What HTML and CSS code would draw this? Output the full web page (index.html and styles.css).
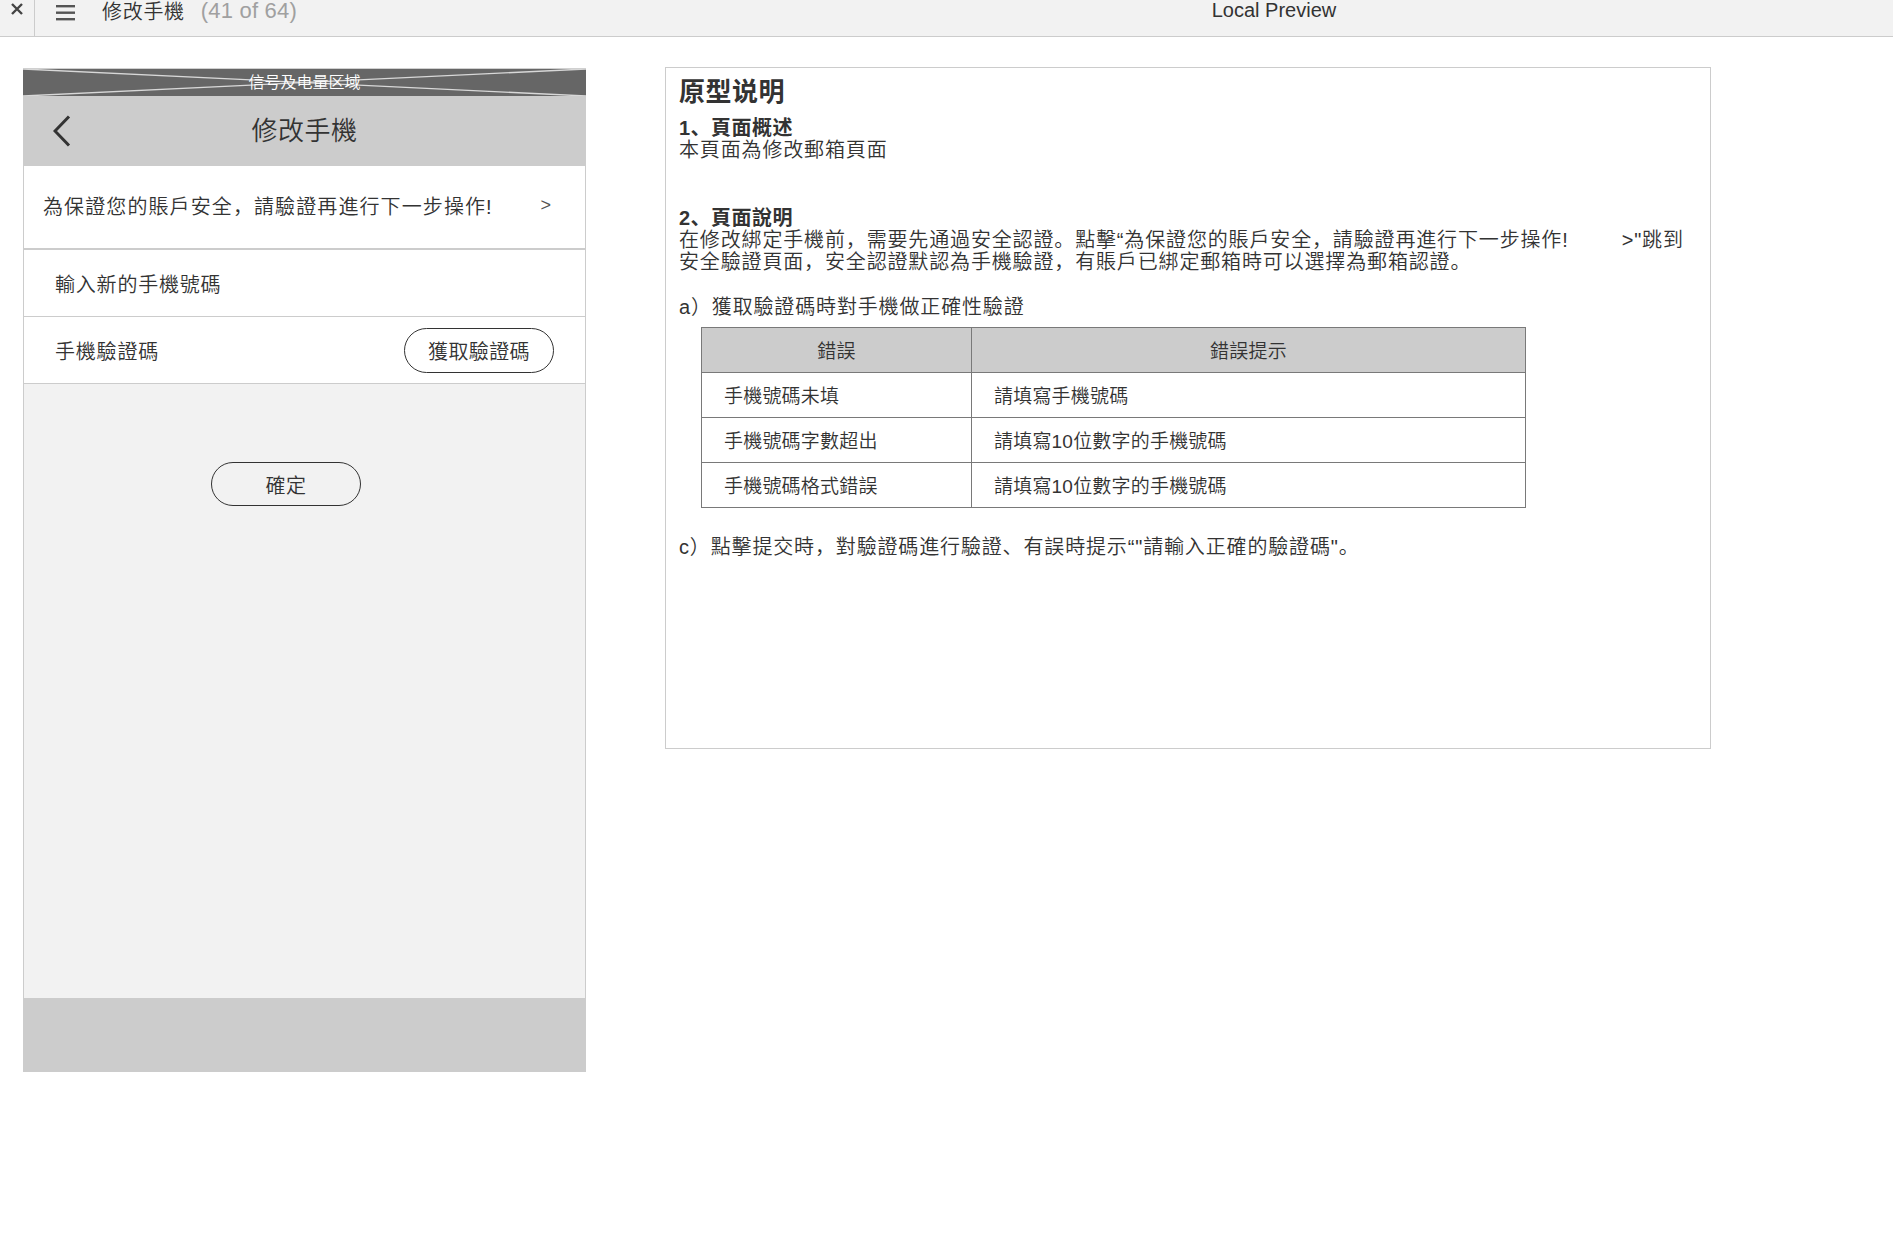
FILE: index.html
```html
<!DOCTYPE html>
<html lang="zh-Hans">
<head>
<meta charset="utf-8">
<title>修改手機</title>
<link rel="stylesheet" href="styles.css">
</head>
<body>
<div class="topbar">
  <div class="tb-close">
    <svg width="12" height="12" viewBox="0 0 12 12"><path d="M1 1 L11 11 M11 1 L1 11" stroke="#444" stroke-width="2.4" fill="none"/></svg>
  </div>
  <div class="tb-left">
    <svg class="tb-menu" width="19" height="18" viewBox="0 0 19 18"><rect x="0" y="1" width="19" height="2.4" fill="#555"/><rect x="0" y="7.5" width="19" height="2.4" fill="#555"/><rect x="0" y="14" width="19" height="2.4" fill="#555"/></svg>
    <span class="tb-title">修改手機</span>
    <span class="tb-count">(41 of 64)</span>
  </div>
  <div class="tb-center">Local Preview</div>
</div>

<div class="main">
  <div class="phone">
    <div class="status">
      <svg class="status-x" viewBox="0 0 100 10" preserveAspectRatio="none"><line x1="0" y1="0" x2="100" y2="10" stroke="#d8d8d8" stroke-width="1.4" vector-effect="non-scaling-stroke"/><line x1="0" y1="10" x2="100" y2="0" stroke="#d8d8d8" stroke-width="1.4" vector-effect="non-scaling-stroke"/></svg>
      <span class="status-text">信号及电量区域</span>
    </div>
    <div class="nav">
      <div class="nav-left">
        <svg width="18" height="32" viewBox="0 0 18 32"><polyline points="16,1.5 2,16 16,30.5" stroke="#333" stroke-width="3" fill="none"/></svg>
      </div>
      <div class="nav-title">修改手機</div>
      <div class="nav-right"></div>
    </div>
    <div class="phone-body">
      <div class="row row-notice">
        <span>為保證您的賬戶安全，請驗證再進行下一步操作!</span>
        <span class="arrow">&gt;</span>
      </div>
      <div class="row row-field">輸入新的手機號碼</div>
      <div class="row row-field row-code">
        <span>手機驗證碼</span>
        <span class="pill pill-code">獲取驗證碼</span>
      </div>
      <div class="body-fill">
        <span class="pill pill-ok">確定</span>
      </div>
    </div>
    <div class="footer"></div>
  </div>

  <div class="notes">
    <div class="notes-title">原型说明</div>
    <div class="line bold">1、頁面概述</div>
    <div class="line">本頁面為修改郵箱頁面</div>
    <div class="line"></div>
    <div class="line"></div>
    <div class="line bold">2、頁面說明</div>
    <div class="line">在修改綁定手機前，需要先通過安全認證。點擊“為保證您的賬戶安全，請驗證再進行下一步操作!<span class="gap"></span>&gt;"跳到</div>
    <div class="line">安全驗證頁面，安全認證默認為手機驗證，有賬戶已綁定郵箱時可以選擇為郵箱認證。</div>
    <div class="line"></div>
    <div class="line">a）獲取驗證碼時對手機做正確性驗證</div>
    <table class="err-table">
      <thead>
        <tr><th class="col1">錯誤</th><th class="col2">錯誤提示</th></tr>
      </thead>
      <tbody>
        <tr><td>手機號碼未填</td><td>請填寫手機號碼</td></tr>
        <tr><td>手機號碼字數超出</td><td>請填寫10位數字的手機號碼</td></tr>
        <tr><td>手機號碼格式錯誤</td><td>請填寫10位數字的手機號碼</td></tr>
      </tbody>
    </table>
    <div class="line line-c">c）點擊提交時，對驗證碼進行驗證、有誤時提示“"請輸入正確的驗證碼"。</div>
  </div>
</div>
</body>
</html>
```

FILE: styles.css
```css
* { box-sizing: border-box; }

html, body {
  margin: 0;
  padding: 0;
  background: #ffffff;
}

body {
  font-family: "Liberation Sans", "Noto Sans CJK SC", sans-serif;
  font-weight: 350;
  color: #333333;
}

/* ---------- top bar ---------- */
.topbar {
  display: flex;
  height: 37px;
  background: #f2f2f2;
  border-bottom: 1px solid #cccccc;
}

.tb-close {
  width: 35px;
  border-right: 1px solid #cccccc;
  display: flex;
  justify-content: center;
  padding-top: 3px;
}

.tb-left {
  width: 620px;
  display: flex;
  align-items: flex-start;
  padding-left: 21px;
}

.tb-menu {
  margin-top: 4px;
}

.tb-title {
  margin-left: 27px;
  font-size: 20px;
  letter-spacing: 0.7px;
  line-height: 24px;
  color: #333333;
}

.tb-count {
  margin-left: 16px;
  font-family: "Liberation Sans", sans-serif;
  font-size: 22px;
  letter-spacing: 0.2px;
  line-height: 22px;
  color: #a0a0a0;
}

.tb-center {
  flex: 1;
  text-align: center;
  font-family: "Liberation Sans", sans-serif;
  font-size: 20px;
  line-height: 20px;
  color: #333333;
}

/* ---------- layout ---------- */
.main {
  display: flex;
  align-items: flex-start;
  gap: 79px;
  padding: 30px 0 0 23px;
}

/* ---------- phone ---------- */
.phone {
  width: 563px;
  height: 1004px;
  display: flex;
  flex-direction: column;
  margin-top: 1px;
}

.status {
  position: relative;
  height: 28px;
  background: #666666;
  display: flex;
  align-items: center;
  justify-content: center;
  border-top: 1px solid #d0d0d0;
}

.status-x {
  position: absolute;
  left: 0;
  top: 0;
  width: 100%;
  height: 100%;
}

.status-text {
  position: relative;
  font-size: 16px;
  line-height: 18px;
  color: #ffffff;
}

.nav {
  height: 70px;
  background: #cccccc;
  display: grid;
  grid-template-columns: 1fr auto 1fr;
  align-items: center;
}

.nav-left {
  padding-left: 30px;
  display: flex;
  align-items: center;
}

.nav-title {
  font-size: 26px;
  letter-spacing: 0.5px;
  line-height: 32px;
  color: #333333;
}

.phone-body {
  flex: 1;
  display: flex;
  flex-direction: column;
  border-left: 1px solid #cccccc;
  border-right: 1px solid #cccccc;
  background: #f2f2f2;
}

.row {
  background: #ffffff;
  display: flex;
  align-items: center;
  font-size: 20px;
  letter-spacing: 0.8px;
  color: #333333;
}

.row-notice {
  height: 84px;
  border-bottom: 2px solid #cccccc;
  justify-content: space-between;
  padding: 0 33px 4px 19px;
  letter-spacing: 1.1px;
}

.arrow {
  font-size: 18px;
  color: #555555;
}

.row-field {
  height: 67px;
  border-bottom: 1px solid #cccccc;
  padding: 0 31px 0 31px;
}

.row-code {
  justify-content: space-between;
}

.pill {
  display: flex;
  align-items: center;
  justify-content: center;
  width: 150px;
  height: 45px;
  border: 1.5px solid #333333;
  border-radius: 23px;
  font-size: 20px;
  letter-spacing: 0.4px;
  color: #333333;
}

.pill-code {
  background: #ffffff;
}

.body-fill {
  flex: 1;
  padding: 78px 0 0 187px;
}

.pill-ok {
  height: 44px;
  background: transparent;
}

.footer {
  height: 74px;
  background: #cccccc;
}

/* ---------- notes panel ---------- */
.notes {
  width: 1046px;
  height: 682px;
  border: 1px solid #cccccc;
  padding: 7px 12px 0 13px;
  background: #ffffff;
}

.notes-title {
  font-size: 26px;
  font-weight: 700;
  letter-spacing: 0.5px;
  line-height: 34px;
  margin-bottom: 8px;
  color: #333333;
}

.line {
  height: 22.4px;
  line-height: 22.4px;
  font-size: 20px;
  letter-spacing: 0.85px;
  white-space: nowrap;
  color: #333333;
}

.bold {
  font-weight: 700;
  letter-spacing: 0.5px;
}

.gap {
  display: inline-block;
  width: 53px;
}

.err-table {
  margin: 8px 0 0 22px;
  width: 825px;
  border-collapse: collapse;
  font-size: 19px;
  letter-spacing: 0.2px;
  color: #333333;
}

.err-table th,
.err-table td {
  border: 1px solid #797979;
  height: 45px;
  padding: 0 0 0 22px;
  font-weight: 350;
  text-align: left;
  vertical-align: middle;
}

.err-table th {
  background: #cccccc;
  text-align: center;
  padding: 0;
}

.err-table .col1 {
  width: 270px;
}

.line-c {
  margin-top: 28px;
}
```
